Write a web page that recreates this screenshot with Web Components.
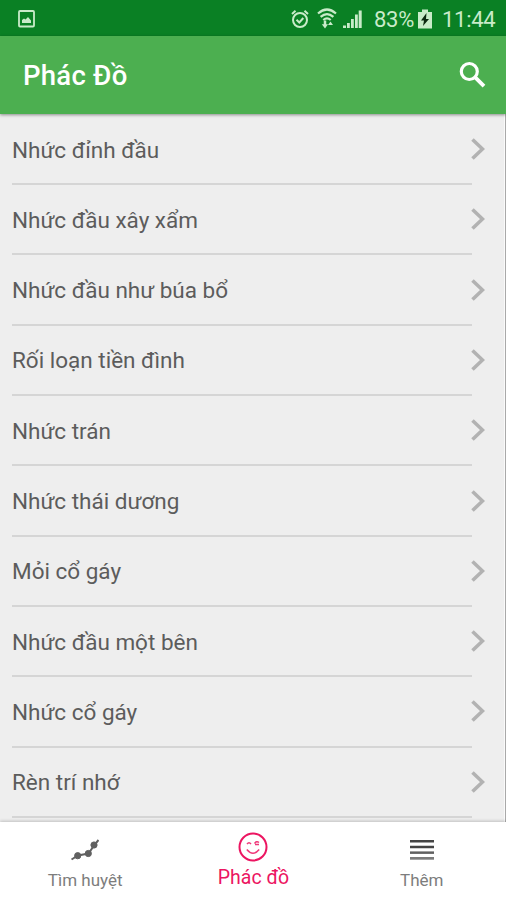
<!DOCTYPE html>
<html lang="vi">
<head>
<meta charset="utf-8">
<title>Phác Đồ</title>
<style>
html,body{margin:0;height:100%;overflow:hidden}
body{font-family:Roboto,"Noto Sans",sans-serif;background:#eee}
</style>
</head>
<body>
<phac-app></phac-app>
<script>
function define(name, html) {
  const t = document.createElement('template');
  t.innerHTML = html;
  customElements.define(name, class extends HTMLElement {
    constructor() {
      super();
      this.attachShadow({ mode: 'open' }).appendChild(t.content.cloneNode(true));
    }
  });
}

define('status-bar', `
<style>
:host{display:flex;align-items:center;height:36px;box-sizing:border-box;background:#0a8024;color:#c9ebc9;padding:1px 11px 0 18px;flex:none}
svg{display:block;flex:none}
.gap{flex:1}
span{font-size:22px;line-height:34px;padding-top:2px;white-space:nowrap}
.pct{margin-left:12px;width:41px;letter-spacing:-.3px}
.bat{margin-left:3px}
.time{margin-left:10px;width:53px;letter-spacing:-.3px}
</style>
<svg width="17" height="18" viewBox="0 0 17 18"><rect x="1" y="1" width="15" height="15.5" rx="1" fill="none" stroke="currentColor" stroke-width="1.8"/><path d="M4 13v-3l2-1.500 1.500 1L10 7l3 3.500V13z" fill="currentColor"/></svg>
<div class="gap"></div>
<svg width="18" height="20" viewBox="0 0 18 20" fill="none" stroke="currentColor" stroke-width="2"><circle cx="9" cy="11" r="7"/><path d="M1 5l3.500-3.200M17 5l-3.500-3.200M5.500 10.800l2.800 2.700 4-4.500"/></svg>
<svg style="margin-left:8px" width="20" height="21" viewBox="0 0 20 21" fill="none" stroke="currentColor" stroke-width="2.200"><path d="M1 5.500Q10-2.500 19 5.500M3.600 8.900Q10 3.200 16.400 8.900M6.300 12Q10 8.800 13.700 12"/><path d="M8 12.500V17" stroke-width="2.500"/><path d="M4.800 16.300h6.200L8 20.500zM11 17l2.500-3.500 2.500 3.500z" fill="currentColor" stroke="none"/></svg>
<svg style="margin-left:6px" width="19" height="20" viewBox="0 0 19 20" fill="currentColor"><path d="M0 19v-2.500h3V19zM4 19v-5h2.800V19zM8 19V10h2.800V19zM12 19V5.500h2.800V19zM15.700 19V1.500h3V19z"/></svg>
<span class="pct">83%</span>
<svg class="bat" width="14" height="20" viewBox="0 0 14 20"><path d="M0 3h4V.5h6V3h4v16.500H0z" fill="currentColor"/><path d="M8.500 4L3 11.500h3L5 17l6-7H8z" fill="#0c2810"/></svg>
<span class="time">11:44</span>
`);

define('app-bar', `
<style>
:host{display:flex;align-items:center;justify-content:space-between;height:78px;box-sizing:border-box;padding:0 20px 0 23px;background:#4caf50;color:#fff;flex:none;position:relative;z-index:1;box-shadow:0 1px 3px rgba(0,0,0,.42)}
h1{margin:2px 0 0;font-size:27.5px;letter-spacing:.25px;font-weight:500;line-height:36px}
svg{display:block;margin-top:-2px}
</style>
<h1><slot></slot></h1>
<svg width="27" height="27" viewBox="0 0 27 27" fill="none" stroke="#fff" stroke-width="3.200"><circle cx="10.300" cy="10.500" r="8"/><path d="M16 16.200l9 9" stroke-width="3.800"/></svg>
`);

define('list-item', `
<style>
:host{display:flex;align-items:center;justify-content:space-between;height:70.3px;box-sizing:border-box;padding:0 21px 0 12px;flex:none;color:#5c5c5c;
background:linear-gradient(#d5d5d5,#d5d5d5) 12px 100%/460px 2px no-repeat}
span{font-size:22.5px;line-height:32px;margin-top:-1px;white-space:nowrap}
svg{display:block;margin-top:-2px}
</style>
<span><slot></slot></span>
<svg width="14" height="22" viewBox="0 0 14 22" fill="none" stroke="#b2b2b2" stroke-width="3.600"><path d="M1.500 1.500L11.500 11 1.500 20.500"/></svg>
`);

define('item-list', `
<style>
:host{display:flex;flex-direction:column;flex:1;min-height:0;overflow:hidden;box-sizing:border-box;padding-top:.9px;background:linear-gradient(90deg,#fafafa 1px,#a9a9a9 1px) 100% 0/2px 100% no-repeat #eee}
</style><slot></slot>
`);

define('nav-tab', `
<style>
:host{display:flex;flex-direction:column;align-items:center;flex:1;color:#7d7d7d;font-size:17px;line-height:22px}
:host([active]){color:#ec1561;font-size:19.5px}
.icon{height:47px;display:flex;align-items:center}
:host([active]) .icon{height:45px}
::slotted(svg){display:block}
</style>
<div class="icon"><slot name="icon"></slot></div>
<span><slot></slot></span>
`);

define('bottom-nav', `
<style>
:host{display:flex;height:78px;background:#fff;flex:none;box-sizing:border-box;padding-left:1px;position:relative;z-index:1;box-shadow:0 -1px 3px rgba(0,0,0,.2)}
</style>
<nav-tab><svg slot="icon" style="margin-top:9px" width="28" height="22" viewBox="0 0 28 22" fill="#606060" stroke="#606060"><path d="M.5 20.500L7 16.500 17.500 14.500 23 6.500 27.500 1" fill="none" stroke-width="2"/><circle cx="6.700" cy="16.700" r="3.100"/><circle cx="17.300" cy="14.500" r="3.100"/><circle cx="23" cy="6" r="3.100"/></svg>Tìm huyệt</nav-tab>
<nav-tab active><svg slot="icon" style="margin-top:5px" width="30" height="30" viewBox="0 0 30 30" fill="none" stroke="#ec1561" stroke-width="2"><circle cx="15" cy="15" r="13.500"/><path d="M9 12q2-2.500 4 0M16.500 11.500q2-3 4.500-1M17 12.500h4M8.800 17.500q6.200 7.500 12.400 0" stroke-width="1.500" stroke-opacity=".85"/></svg>Phác đồ</nav-tab>
<nav-tab><svg slot="icon" style="margin-top:8px" width="24" height="20" viewBox="0 0 24 20"><path fill="#444" d="M0 0h24v2.500H0zM0 5.700h24v2.500H0z"/><path fill="#606060" d="M0 11.400h24v2.500H0z"/><path fill="#7b7b7b" d="M0 17h24v2.700H0z"/></svg>Thêm</nav-tab>
`);

define('phac-app', `
<style>:host{display:flex;flex-direction:column;width:506px;height:900px;overflow:hidden;background:#eee}</style>
<status-bar></status-bar>
<app-bar>Phác Đồ</app-bar>
<item-list>
<list-item>Nhức đỉnh đầu</list-item>
<list-item>Nhức đầu xây xẩm</list-item>
<list-item>Nhức đầu như búa bổ</list-item>
<list-item>Rối loạn tiền đình</list-item>
<list-item>Nhức trán</list-item>
<list-item>Nhức thái dương</list-item>
<list-item>Mỏi cổ gáy</list-item>
<list-item>Nhức đầu một bên</list-item>
<list-item>Nhức cổ gáy</list-item>
<list-item>Rèn trí nhớ</list-item>
</item-list>
<bottom-nav></bottom-nav>
`);
</script>
</body>
</html>
